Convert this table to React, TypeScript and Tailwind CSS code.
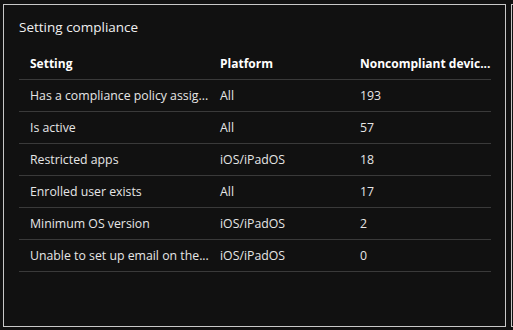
import React from "react";

const rows = [
  ["Has a compliance policy assig...", "All", "193"],
  ["Is active", "All", "57"],
  ["Restricted apps", "iOS/iPadOS", "18"],
  ["Enrolled user exists", "All", "17"],
  ["Minimum OS version", "iOS/iPadOS", "2"],
  ["Unable to set up email on the...", "iOS/iPadOS", "0"],
];

export default function App() {
  return (
    <div
      className="w-[513px] h-[330px] overflow-hidden bg-[#111111] flex items-start pl-[3px] pt-[4px] gap-[5px]"
      style={{ fontFamily: '"Open Sans", "Noto Sans", sans-serif' }}
    >
      <div className="shrink-0 w-[503px] h-[323px] border border-[#c8c8c8] pl-[15px] pr-[14px] pt-[12px]">
        <div className="text-[13.5px] leading-[20px] text-[#f0f0f0] h-[31px]">Setting compliance</div>
        <div className="flex flex-col">
          <div className="grid grid-cols-[190px_140px_141px] h-[32px] items-center border-b border-[#3a3a3a] text-[12px] font-bold text-white">
            <div className="pl-[11px] whitespace-nowrap">Setting</div>
            <div className="pl-[11px] whitespace-nowrap">Platform</div>
            <div className="pl-[11px] whitespace-nowrap">Noncompliant devic...</div>
          </div>
          {rows.map((r) => (
            <div
              key={r[0]}
              className="grid grid-cols-[190px_140px_141px] h-[32px] pt-[2px] items-center border-b border-[#3a3a3a] text-[12.3px] text-[#e6e6e6]"
            >
              <div className="pl-[11px] whitespace-nowrap">{r[0]}</div>
              <div className="pl-[11px] whitespace-nowrap">{r[1]}</div>
              <div className="pl-[11px] whitespace-nowrap">{r[2]}</div>
            </div>
          ))}
        </div>
      </div>
      <div className="shrink-0 w-[100px] h-[323px] border border-[#c8c8c8]" />
    </div>
  );
}
